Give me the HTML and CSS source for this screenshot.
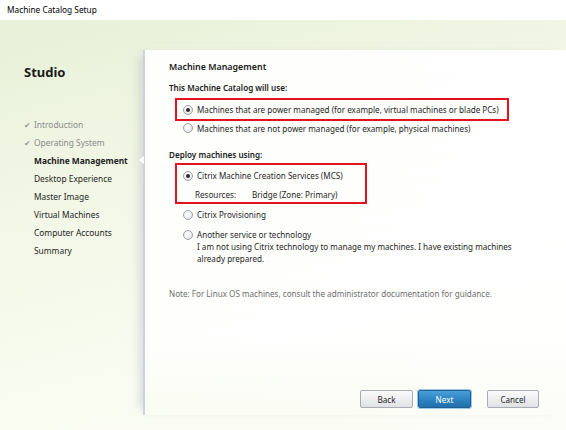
FILE: index.html
```html
<!DOCTYPE html>
<html>
<head>
<meta charset="utf-8">
<link rel="stylesheet" href="styles.css">
</head>
<body>
<div class="titlebar">Machine Catalog Setup</div>
<div class="wizard">
  <aside class="sidebar">
    <div class="brand">Studio</div>
    <ul class="steps">
      <li class="done"><span class="check">✔</span>Introduction</li>
      <li class="done"><span class="check">✔</span>Operating System</li>
      <li class="active">Machine Management</li>
      <li>Desktop Experience</li>
      <li>Master Image</li>
      <li>Virtual Machines</li>
      <li>Computer Accounts</li>
      <li>Summary</li>
    </ul>
  </aside>
  <main class="panel">
    <span class="notch"></span>
    <h1 class="heading">Machine Management</h1>
    <div class="label first">This Machine Catalog will use:</div>
    <div class="highlight wide">
      <div class="option"><span class="radio on"></span>Machines that are power managed (for example, virtual machines or blade PCs)</div>
    </div>
    <div class="option plain row2"><span class="radio"></span>Machines that are not power managed (for example, physical machines)</div>

    <div class="label second">Deploy machines using:</div>
    <div class="highlight narrow">
      <div class="option"><span class="radio on"></span>Citrix Machine Creation Services (MCS)</div>
      <div class="resources"><span class="res-key">Resources:</span><span>Bridge (Zone: Primary)</span></div>
    </div>
    <div class="option plain spaced"><span class="radio"></span>Citrix Provisioning</div>
    <div class="option plain spaced"><span class="radio"></span>Another service or technology</div>
    <p class="desc">I am not using Citrix technology to manage my machines. I have existing machines already prepared.</p>

    <p class="note">Note: For Linux OS machines, consult the administrator documentation for guidance.</p>

    <div class="footer">
      <button class="btn">Back</button>
      <button class="btn primary">Next</button>
      <button class="btn cancel">Cancel</button>
    </div>
  </main>
</div>
</body>
</html>
```

FILE: styles.css
```css
* { box-sizing: border-box; }
html, body { margin: 0; padding: 0; }
body {
  width: 566px;
  height: 430px;
  overflow: hidden;
  font-family: "Noto Sans", "Open Sans", sans-serif;
  font-size: 8.1px;
  color: #1e1e1e;
  background: #ffffff;
}
.titlebar {
  height: 20px;
  padding: 3px 0 0 7px;
  font-size: 8.3px;
  line-height: 13px;
  color: #000;
  background: #fff;
}
.wizard {
  display: flex;
  height: 410px;
  background: linear-gradient(165deg, #e8f0d8 0%, #f2f7e6 35%, #f9fcf1 70%, #fcfdf7 100%);
}
.sidebar {
  width: 143px;
  flex: none;
  padding: 43px 0 0 24px;
}
.brand {
  font-size: 13px;
  font-weight: 700;
  line-height: 18px;
  color: #1a1a1a;
}
.steps {
  list-style: none;
  margin: 35px 0 0 0;
  padding: 0;
}
.steps li {
  height: 18px;
  line-height: 18px;
  padding-left: 10px;
  position: relative;
  font-size: 8.4px;
  color: #1e1e1e;
}
.steps li.done { color: #8a8a8a; padding-left: 0; }
.steps li.active { font-weight: 700; }
.check {
  display: inline-block;
  width: 10px;
  font-size: 8px;
  color: #999999;
}
.panel {
  position: relative;
  flex: 1;
  margin: 30px 0 15px 0;
  padding: 10px 0 0 24px;
  display: flex;
  flex-direction: column;
  align-items: flex-start;
  background: linear-gradient(to bottom, rgba(255,255,255,0.95) 0%, rgba(255,255,255,0.9) 80%, rgba(255,255,255,0) 100%);
  border-left: 2px solid #cdd1d9;
  box-shadow: -8px 0 10px -6px rgba(170,178,195,0.55);
}
.notch {
  position: absolute;
  left: -6px;
  top: 106px;
  width: 0;
  height: 0;
  border-top: 4px solid transparent;
  border-bottom: 4px solid transparent;
  border-right: 5px solid #ffffff;
}
.heading {
  margin: 0;
  font-size: 8.9px;
  font-weight: 600;
  line-height: 14px;
  color: #1a1a1a;
}
.label {
  font-weight: 600;
  line-height: 13px;
  color: #1a1a1a;
}
.label.first { margin-top: 7px; }
.label.second { margin-top: 13px; }
.highlight {
  border: 2px solid #e3121f;
  margin-left: 6px;
}
.highlight.wide { width: 334px; height: 23px; margin-top: 4px; padding: 3px 0 0 6px; }
.highlight.narrow { width: 192px; height: 41px; margin-top: 2px; padding: 4px 0 0 6px; }
.option {
  display: flex;
  align-items: center;
  height: 13px;
  line-height: 13px;
  white-space: nowrap;
}
.option.plain { margin-left: 14px; height: 19px; }
.option.row2 { height: 14px; }
.option.spaced { margin-top: 1px; }
.radio {
  width: 10px;
  height: 10px;
  border-radius: 50%;
  border: 1px solid #9ca0a6;
  background: radial-gradient(circle at 40% 35%, #ffffff 0%, #e6e7ea 70%, #d4d6da 100%);
  margin-right: 4px;
  flex: none;
  position: relative;
}
.radio.on::after {
  content: "";
  position: absolute;
  left: 2px;
  top: 2px;
  width: 4px;
  height: 4px;
  border-radius: 50%;
  background: #2b2b2b;
}
.resources {
  display: flex;
  margin-top: 6px;
  padding-left: 12px;
  line-height: 13px;
}
.res-key { width: 57px; }
.desc {
  margin: -3px 0 0 28px;
  width: 320px;
  line-height: 12px;
}
.note {
  margin: 22px 0 0 0;
  color: #6e6e6e;
  line-height: 13px;
}
.footer {
  margin-top: auto;
  margin-bottom: 7px;
  align-self: stretch;
  display: flex;
  padding-left: 191px;
}
.btn {
  width: 53px;
  height: 18px;
  padding: 0;
  font-family: inherit;
  font-size: 8.1px;
  color: #1e1e1e;
  border: 1px solid #a9acb2;
  border-radius: 2px;
  background: linear-gradient(to bottom, #fbfbfb 0%, #eeeff1 50%, #dfe1e4 100%);
}
.btn.primary {
  margin-left: 5px;
  color: #ffffff;
  border-color: #1f5f95;
  background: linear-gradient(to bottom, #4a9fd6 0%, #2f86c4 50%, #236fa9 100%);
  box-shadow: 0 0 0 1px #9cc8ea;
}
.btn.cancel { margin-left: 16px; width: 52px; }
```
